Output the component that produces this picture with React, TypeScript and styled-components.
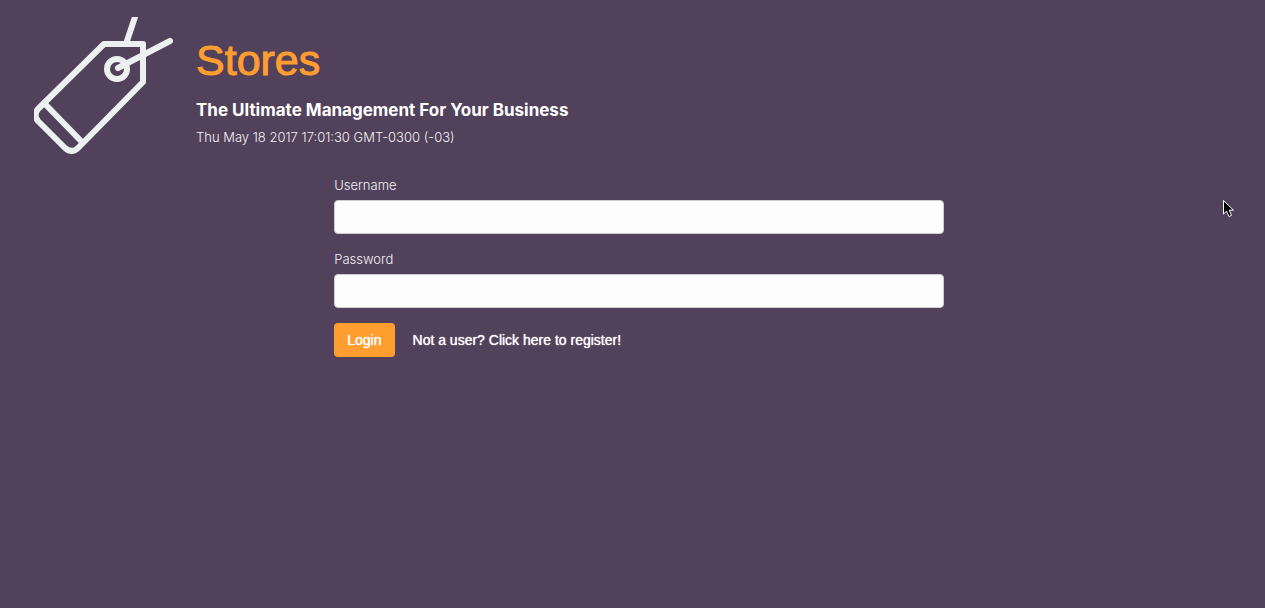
import React from "react";
import styled, { createGlobalStyle } from "styled-components";

const GlobalStyle = createGlobalStyle`
  *, *::before, *::after { box-sizing: border-box; }
  body {
    margin: 0;
    background: #52415b;
    color: #fff;
    font-family: "Liberation Sans", Arial, sans-serif;
    font-size: 14px;
    line-height: 20px;
  }
`;

const Page = styled.div`
  position: relative;
  min-height: 100vh;
  overflow: hidden;
`;

const Header = styled.header`
  display: flex;
  gap: 22px;
  padding: 17px 34px 0;
`;

const Logo = styled.svg`
  flex: none;
  width: 140px;
  height: 138px;
`;

const Heading = styled.div`
  padding-top: 18px;
`;

const Title = styled.h1`
  margin: 0 0 15px;
  color: #ff9e30;
  font-size: 43px;
  font-weight: 400;
  line-height: 50px;
  -webkit-text-stroke: 1px #ff9e30;
`;

const Tagline = styled.h2`
  margin: 0 0 7px;
  font-family: Inter, "Liberation Sans", sans-serif;
  font-size: 17px;
  font-weight: 700;
  line-height: 20px;
`;

const Timestamp = styled.p`
  margin: 0;
  color: #f4f2f5;
  font-family: Inter, "Liberation Sans", sans-serif;
  font-size: 13px;
  font-weight: 300;
`;

const Form = styled.form`
  width: calc(50% - 23px);
  margin: 20px 0 0 calc(25% + 18px);
`;

const Field = styled.div`
  display: flex;
  flex-direction: column;
  gap: 5px;
  margin-bottom: 15px;
`;

const Label = styled.label`
  color: #f4f2f5;
  font-family: Inter, "Liberation Sans", sans-serif;
  font-size: 13px;
  font-weight: 300;
`;

const Input = styled.input`
  width: 100%;
  height: 34px;
  padding: 6px 12px;
  border: 1px solid #ccc;
  border-radius: 4px;
  background: #fdfdfd;
  color: #555;
  font: inherit;
`;

const Actions = styled.div`
  display: flex;
  align-items: center;
  gap: 18px;
`;

const Button = styled.button`
  height: 34px;
  padding: 0 13px;
  border: 0;
  border-radius: 4px;
  background: #ff9e30;
  color: #fff;
  font: inherit;
  text-shadow: 0 0 1px #fff;
`;

const RegisterLink = styled.a`
  color: #fff;
  text-decoration: none;
  text-shadow: 0 0 1px #fff;
`;

const Pointer = styled.svg`
  position: absolute;
  top: 199px;
  left: 1222px;
  width: 13px;
  height: 19px;
  pointer-events: none;
`;

export default function App() {
  return (
    <Page>
      <GlobalStyle />
      <Header>
        <Logo viewBox="0 0 140 138" fill="none" stroke="#ecf0f1" strokeWidth="6" strokeLinecap="round" strokeLinejoin="round" aria-hidden="true">
          <path d="M70 27 L109 27 V65 L44 131 Q38 137 31 131 L4 104 Q-1 98 4 92 Z" />
          <path d="M12 88 L47 124" />
          <circle cx="83" cy="52" r="10" />
          <path d="M84 51 L136 24 M93 24 L103 -6" />
        </Logo>
        <Heading>
          <Title>Stores</Title>
          <Tagline>The Ultimate Management For Your Business</Tagline>
          <Timestamp>Thu May 18 2017 17:01:30 GMT-0300 (-03)</Timestamp>
        </Heading>
      </Header>
      <Form onSubmit={(event: React.FormEvent) => event.preventDefault()}>
        <Field>
          <Label htmlFor="username">Username</Label>
          <Input id="username" type="text" />
        </Field>
        <Field>
          <Label htmlFor="password">Password</Label>
          <Input id="password" type="password" />
        </Field>
        <Actions>
          <Button type="submit">Login</Button>
          <RegisterLink href="#register">Not a user? Click here to register!</RegisterLink>
        </Actions>
      </Form>
      <Pointer viewBox="0 0 13 19" aria-hidden="true">
        <path d="M1.5 1.5 V15 L4.5 12.2 L7 17.5 L9.5 16.4 L7.2 11.2 H11.5 Z" fill="#000" stroke="#fff" strokeWidth="1" />
      </Pointer>
    </Page>
  );
}
